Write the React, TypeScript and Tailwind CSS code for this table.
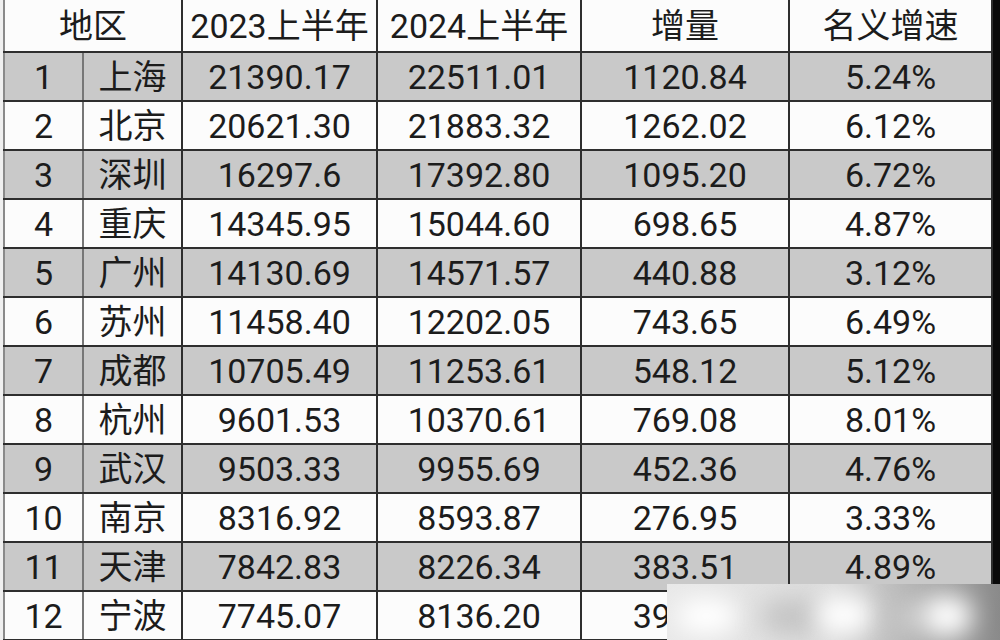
import React from "react";

const rows: [string, string, string, string, string, string][] = [
  ["1", "上海", "21390.17", "22511.01", "1120.84", "5.24%"],
  ["2", "北京", "20621.30", "21883.32", "1262.02", "6.12%"],
  ["3", "深圳", "16297.6", "17392.80", "1095.20", "6.72%"],
  ["4", "重庆", "14345.95", "15044.60", "698.65", "4.87%"],
  ["5", "广州", "14130.69", "14571.57", "440.88", "3.12%"],
  ["6", "苏州", "11458.40", "12202.05", "743.65", "6.49%"],
  ["7", "成都", "10705.49", "11253.61", "548.12", "5.12%"],
  ["8", "杭州", "9601.53", "10370.61", "769.08", "8.01%"],
  ["9", "武汉", "9503.33", "9955.69", "452.36", "4.76%"],
  ["10", "南京", "8316.92", "8593.87", "276.95", "3.33%"],
  ["11", "天津", "7842.83", "8226.34", "383.51", "4.89%"],
  ["12", "宁波", "7745.07", "8136.20", "393.13", "5.03%"],
];

export default function App() {
  return (
    <div
      className="relative w-[1000px] h-[640px] overflow-hidden bg-[#f4f4f4] text-[#1c1c1c]"
      style={{ fontFamily: "Roboto, 'Noto Sans CJK SC', sans-serif" }}
    >
      <div className="flex h-full">
        <div className="w-[3px] bg-[#f0f0f0]" />
        <table className="table-fixed border-collapse w-[990px] text-[34px] leading-none">
          <colgroup>
            <col className="w-[79px]" />
            <col className="w-[99px]" />
            <col className="w-[195px]" />
            <col className="w-[204px]" />
            <col className="w-[208px]" />
            <col className="w-[203px]" />
          </colgroup>
          <thead>
            <tr className="h-[52px] bg-[#fcfcfc]">
              <th colSpan={2} className="font-normal text-center border-2 border-t-0 border-[#2e2e2e] border-l-[#8a8a8a]">
                地区
              </th>
              <th className="font-normal text-center border-2 border-t-0 border-[#2e2e2e]">2023上半年</th>
              <th className="font-normal text-center border-2 border-t-0 border-[#2e2e2e]">2024上半年</th>
              <th className="font-normal text-center border-2 border-t-0 border-[#2e2e2e]">增量</th>
              <th className="font-normal text-center border-2 border-t-0 border-[#2e2e2e]">名义增速</th>
            </tr>
          </thead>
          <tbody>
            {rows.map((r, i) => (
              <tr key={r[0]} className={i % 2 === 0 ? "h-[49px] bg-[#c9c9c9]" : "h-[49px] bg-[#fcfcfc]"}>
                <td className="text-center border-2 border-[#2e2e2e] border-l-[#8a8a8a] border-r-[#777]">{r[0]}</td>
                <td className="text-center border-2 border-[#2e2e2e] border-l-[#777]">{r[1]}</td>
                <td className="text-center border-2 border-[#2e2e2e]">{r[2]}</td>
                <td className="text-center border-2 border-[#2e2e2e]">{r[3]}</td>
                <td className="text-center border-2 border-[#2e2e2e]">{r[4]}</td>
                <td className="text-center border-2 border-[#2e2e2e]">{r[5]}</td>
              </tr>
            ))}
          </tbody>
        </table>
        <div className="flex-1 bg-[#0a0a0a]" />
      </div>

      {/* blurred watermark at bottom right */}
      <div className="absolute left-[667px] top-[584px] w-[333px] h-[56px] overflow-hidden bg-gradient-to-r from-[#e9e9e9] via-[#dcdcdc] to-[#8a8a8a]">
        <div className="absolute left-[10px] top-[14px] w-[60px] h-[36px] rounded-full bg-white blur-md" />
        <div className="absolute left-[95px] top-[16px] w-[60px] h-[34px] rounded-full bg-[#c4c4c4] blur-md" />
        <div className="absolute left-[150px] top-[12px] w-[55px] h-[38px] rounded-full bg-white blur-md" />
        <div className="absolute left-[220px] top-[18px] w-[40px] h-[30px] rounded-full bg-[#c8c8c8] blur-md" />
        <div className="absolute left-[255px] top-[12px] w-[50px] h-[40px] rounded-full bg-white blur-md" />
      </div>
    </div>
  );
}
